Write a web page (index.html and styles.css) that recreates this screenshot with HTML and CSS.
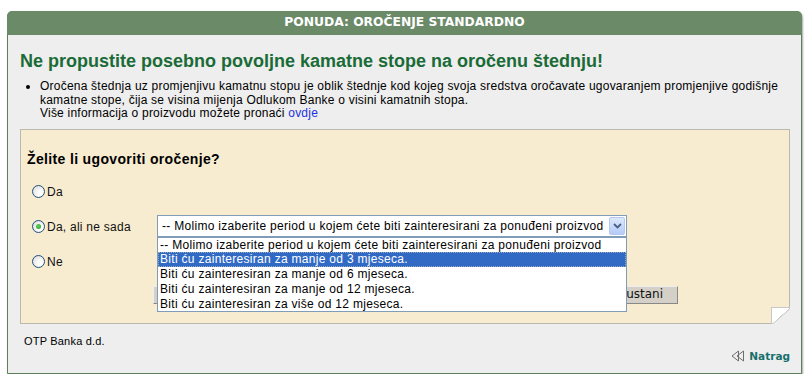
FILE: index.html
```html
<!DOCTYPE html>
<html lang="hr">
<head>
    <meta charset="UTF-8">
    <title>Ponuda: oročenje standardno</title>
    <link rel="stylesheet" href="styles.css">
</head>
<body>
    <div class="panel">
        <div class="panel-head">PONUDA: OROČENJE STANDARDNO</div>
        <div class="panel-body">
            <h1 class="offer-title">Ne propustite posebno povoljne kamatne stope na oročenu štednju!</h1>
            <ul class="offer-text">
                <li>Oročena štednja uz promjenjivu kamatnu stopu je oblik štednje kod kojeg svoja sredstva oročavate ugovaranjem promjenjive godišnje kamatne stope, čija se visina mijenja Odlukom Banke o visini kamatnih stopa.<br>Više informacija o proizvodu možete pronaći <a href="#">ovdje</a></li>
            </ul>

            <div class="question-box">
                <h2 class="question">Želite li ugovoriti oročenje?</h2>

                <div class="answer-row">
                    <span class="radio"></span><span class="answer-label">Da</span>
                </div>
                <div class="answer-row">
                    <span class="radio checked"></span><span class="answer-label">Da, ali ne sada</span>
                    <div class="select-wrap">
                        <div class="select-box">
                            <span class="select-value">-- Molimo izaberite period u kojem ćete biti zainteresirani za ponuđeni proizvod</span>
                            <span class="select-arrow">
                                <svg width="9" height="6" viewBox="0 0 9 6"><path d="M1 1 L4.5 4.5 L8 1" fill="none" stroke="#4d6185" stroke-width="1.8"/></svg>
                            </span>
                        </div>
                        <ul class="select-list">
                            <li>-- Molimo izaberite period u kojem ćete biti zainteresirani za ponuđeni proizvod</li>
                            <li class="selected">Biti ću zainteresiran za manje od 3 mjeseca.</li>
                            <li>Biti ću zainteresiran za manje od 6 mjeseca.</li>
                            <li>Biti ću zainteresiran za manje od 12 mjeseca.</li>
                            <li>Biti ću zainteresiran za više od 12 mjeseca.</li>
                        </ul>
                    </div>
                </div>
                <div class="answer-row">
                    <span class="radio"></span><span class="answer-label">Ne</span>
                </div>

                <div class="buttons">
                    <button class="btn btn-ok">Potvrdi</button>
                    <button class="btn">Odustani</button>
                </div>
                <span class="page-fold"></span>
            </div>

            <div class="footer-row">
                <span class="bank-name">OTP Banka d.d.</span>
            </div>
            <div class="back-row">
                <a href="#" class="back-link">
                    <svg width="15" height="12" viewBox="0 0 15 12"><path d="M7.5 1 L1 6 L7.5 11 Z M12.5 1 L6 6 L12.5 11 Z" fill="none" stroke="#6e6e6e" stroke-width="1"/></svg>
                    Natrag
                </a>
            </div>
        </div>
    </div>
</body>
</html>
```

FILE: styles.css
```css
* {
    box-sizing: border-box;
}

body {
    margin: 0;
    padding: 11px 5px 0 7px;
    background: #fff;
    font-family: 'Liberation Sans', Arial, sans-serif;
    font-size: 11px;
    color: #000;
}

.panel {
    border: 1px solid #5f7e5c;
    border-radius: 6px 6px 0 0;
    background: #eeeeee;
    box-shadow: 1px 1px 2px rgba(0, 0, 0, 0.35);
    height: 363px;
}

.panel-head {
    background: #6b8a68;
    border-radius: 5px 5px 0 0;
    height: 24px;
    line-height: 22px;
    text-align: center;
    color: #fff;
    font-family: 'DejaVu Sans', Verdana, sans-serif;
    font-weight: bold;
    font-size: 12.3px;
    margin: -1px -1px 0 -1px;
}

.panel-body {
    padding: 15px 11px 0 12px;
}

.offer-title {
    margin: 0;
    font-size: 18px;
    line-height: 22px;
    color: #1a6b37;
    font-weight: bold;
}

.offer-text {
    margin: 8px 0 0 0;
    padding-left: 20px;
    font-size: 12px;
    letter-spacing: 0.22px;
    line-height: 13.5px;
    list-style: disc;
}

.offer-text a {
    color: #2234e0;
    text-decoration: none;
}

.question-box {
    position: relative;
    margin-top: 8px;
    height: 195px;
    border: 1px solid #bbb8ae;
    background: #f8ecd0;
    padding: 21px 6px 0 6px;
}

.question {
    margin: 0 0 14px 0;
    font-size: 14px;
    letter-spacing: 0.35px;
    font-weight: bold;
}

.answer-row {
    display: flex;
    align-items: center;
    height: 22px;
    margin-bottom: 13px;
    font-size: 12px;
    letter-spacing: 0.25px;
}

.radio {
    width: 13px;
    height: 13px;
    margin-left: 5px;
    margin-right: 2px;
    border: 1px solid #1d5281;
    border-radius: 50%;
    background: radial-gradient(circle at 65% 65%, #fff 20%, #dcdad4 90%);
    position: relative;
    flex: none;
}

.radio.checked::after {
    content: "";
    position: absolute;
    left: 3px;
    top: 3px;
    width: 5px;
    height: 5px;
    border-radius: 50%;
    background: radial-gradient(circle at 40% 40%, #62d15b, #21a121);
}

.answer-label {
    width: 110px;
    color: #111;
}

.select-wrap {
    position: relative;
    letter-spacing: 0.3px;
    margin-top: -2px;
}

.select-box {
    width: 470px;
    height: 22px;
    border: 1px solid #7f9db9;
    background: #fff;
    display: flex;
    align-items: center;
    padding-left: 4px;
    padding-right: 1px;
}

.select-value {
    flex: 1;
    white-space: nowrap;
    overflow: hidden;
}

.select-arrow {
    width: 16px;
    height: 18px;
    background: linear-gradient(#dde8fd, #b5cbf7);
    border: 1px solid #b5c8ef;
    border-radius: 2px;
    display: flex;
    align-items: center;
    justify-content: center;
}

.select-list {
    position: absolute;
    left: 0;
    top: 22px;
    width: 470px;
    margin: 0;
    padding: 0;
    list-style: none;
    border: 1px solid #7f9db9;
    background: #fff;
    z-index: 2;
}

.select-list li {
    height: 14.8px;
    line-height: 14px;
    padding-left: 2px;
    white-space: nowrap;
}

.select-list li.selected {
    background: #316ac5;
    color: #fff;
    outline: 1px dotted #9ab;
    outline-offset: -1px;
}

.buttons {
    display: flex;
    justify-content: space-between;
    width: 525px;
    margin-left: 126px;
    margin-top: 3px;
}

.btn {
    height: 18px;
    padding: 0 14px 0 8px;
    background: #d4d0c8;
    border: 1px solid #888;
    border-top-color: #eee;
    border-left-color: #eee;
    font-family: 'DejaVu Sans', Tahoma, sans-serif;
    font-size: 12px;
    line-height: 15px;
    color: #111;
}

.page-fold {
    position: absolute;
    right: -1px;
    bottom: -1px;
    width: 19px;
    height: 17px;
    border-left: 1px solid #c8c8c8;
    border-top: 1px solid #c8c8c8;
    background: linear-gradient(to bottom right, #fff 49%, #c4c4c4 50%, #eeeeee 56%);
}

.footer-row {
    padding: 11px 0 0 4px;
    font-size: 11px;
    letter-spacing: 0.2px;
}

.back-row {
    display: flex;
    justify-content: flex-end;
    margin-top: 3px;
}

.back-link {
    display: flex;
    align-items: center;
    gap: 3px;
    color: #16706d;
    font-family: 'DejaVu Sans', Verdana, sans-serif;
    font-weight: bold;
    font-size: 10.5px;
    text-decoration: none;
}
```
